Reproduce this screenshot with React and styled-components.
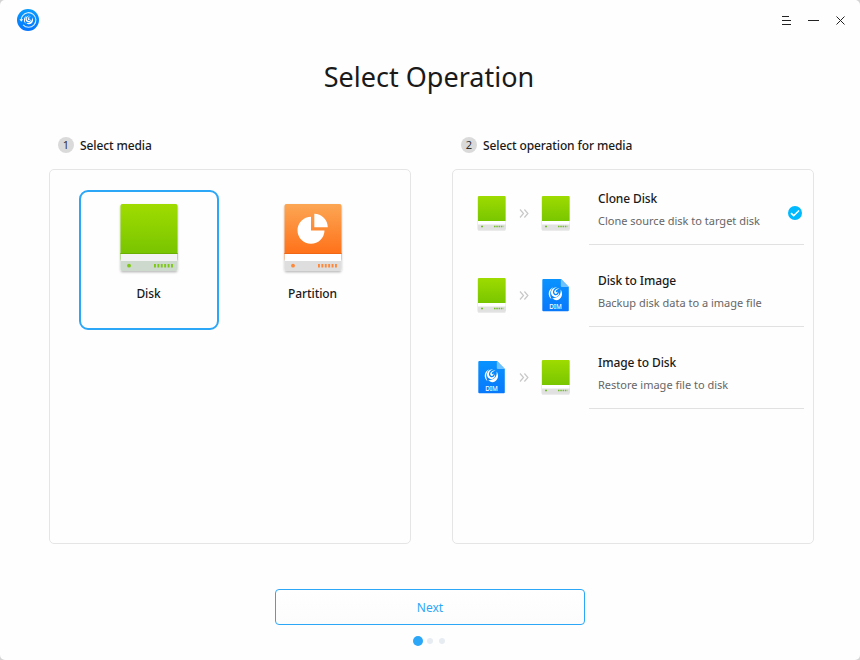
import React from 'react';
import styled, { createGlobalStyle } from 'styled-components';

const GlobalStyle = createGlobalStyle`
  *, *::before, *::after { box-sizing: border-box; }
  html, body { margin: 0; padding: 0; background: #d4d4d4; }
  body { font-family: "Noto Sans", sans-serif; }
`;

const Window = styled.div`
  width: 860px;
  height: 660px;
  display: flex;
  flex-direction: column;
  background: #fefefe;
  border-radius: 5px;
  overflow: hidden;
  color: #1a1a1a;
`;

const TitleBar = styled.header`
  height: 40px;
  display: flex;
  align-items: center;
  justify-content: space-between;
  padding: 0 13px 0 16px;
  svg { display: block; }
`;

const WindowControls = styled.div`
  display: flex;
  gap: 13px;
`;

const ControlButton = styled.button`
  width: 14px;
  height: 14px;
  padding: 0;
  border: 0;
  background: none;
`;

const Title = styled.h1`
  margin: 18px 2px 0 0;
  height: 38px;
  line-height: 38px;
  font-size: 27px;
  font-weight: 400;
  text-align: center;
`;

const Columns = styled.main`
  display: flex;
  gap: 41px;
  margin: 39px 46px 0 49px;
`;

const Column = styled.section`
  width: 362px;
`;

const StepHeading = styled.h2`
  display: flex;
  align-items: center;
  gap: 6px;
  height: 20px;
  margin: 0 0 14px;
  padding-left: 9px;
  font-size: 12px;
  font-weight: 500;
  line-height: 20px;
`;

const StepTitle = styled.span`
  padding-top: 2px;
  letter-spacing: -0.11px;
`;

const StepNumber = styled.span`
  width: 16px;
  height: 16px;
  border-radius: 50%;
  background: #dadada;
  color: #303030;
  font-size: 11px;
  font-weight: 400;
  line-height: 16px;
  text-align: center;
`;

const Panel = styled.div`
  height: 375px;
  border: 1px solid #e5e5e5;
  border-radius: 5px;
`;

const MediaGrid = styled.div`
  display: flex;
  gap: 24px;
  padding: 20px 0 0 29px;
`;

const MediaCard = styled.div`
  width: 140px;
  height: 140px;
  display: flex;
  flex-direction: column;
  align-items: center;
  padding-top: 10px;
  border: 2px solid ${(p) => (p.$selected ? '#2ca7f8' : 'transparent')};
  border-radius: 9px;
  svg { display: block; }
`;

const MediaLabel = styled.span`
  margin: 7px 1px 0 0;
  font-size: 12px;
  font-weight: 500;
  line-height: 18px;
  letter-spacing: -0.11px;
`;

const OperationRow = styled.div`
  display: flex;
  height: 75px;
  margin-bottom: 7px;
  padding-left: 20px;
`;

const Flow = styled.div`
  width: 116px;
  display: flex;
  padding-top: 24px;
  svg { display: block; }
`;

const OperationBody = styled.div`
  width: 215px;
  display: flex;
  align-items: center;
  justify-content: space-between;
  padding: 12px 2px 0 9px;
  border-bottom: 1px solid #e1e1e1;
`;

const OperationText = styled.div`
  height: 60px;
`;

const OperationName = styled.div`
  margin-top: 7px;
  font-size: 12px;
  font-weight: 500;
  line-height: 18px;
  letter-spacing: -0.11px;
`;

const OperationNote = styled.div`
  margin-top: 4px;
  font-size: 11px;
  line-height: 17px;
  color: #666;
`;

const NextButton = styled.button`
  width: 310px;
  height: 36px;
  margin: 45px auto 0;
  padding: 0;
  border: 1px solid #2ca7f8;
  border-radius: 4px;
  background: linear-gradient(#fff, #fcfcfc);
  color: #2ca7f8;
  font-family: inherit;
  font-size: 12px;
`;

const Dots = styled.div`
  display: flex;
  align-items: center;
  height: 10px;
  margin: 11px 0 0 413px;
`;

const Dot = styled.i`
  width: ${(p) => (p.$active ? 10 : 6)}px;
  height: ${(p) => (p.$active ? 10 : 6)}px;
  margin-right: ${(p) => (p.$active ? 4 : 6)}px;
  border-radius: 50%;
  background: ${(p) => (p.$active ? '#2ca7f8' : '#e7ecf2')};
`;

const Swirl = () => (
  <g fill="#fff">
    <path d="M-2-6.5C-7.4-4.6-8.2 2.4-3.9 5.4-5.9 1.3-5.8-3.4-2-6.5Z" />
    <path d="M1.8-6.7C-4.6-6.4-6.3.5-2.1 2.8 1 4.4 4.4 2 3.6-1.5 3 1.2.5 2.2-1.2.9-3.8-.9-2.3-5.3 1.8-6.7Z" />
    <path d="M4.4-5.2C.7-5.8-2-2.9-.9-.7.2 1.2 2.6-.5 2.2-2.5 1.4-1.2.5-1.1.4-2.1.3-3.5 2.1-4.8 4.4-5.2Z" />
    <path d="M5.2-4.2C6 .4 2.8 4.7-3.1 4.3-1.6 6.4 1.6 7.3 4.2 5.2 7.1 2.9 7.4-1.2 5.2-4.2Z" />
  </g>
);

const AppLogo = () => (
  <svg width="24" height="24" viewBox="0 0 24 24">
    <defs>
      <linearGradient id="logoFill" x2="0" y2="1">
        <stop stopColor="#079cff" /><stop offset="1" stopColor="#0575ff" />
      </linearGradient>
    </defs>
    <circle cx="12" cy="12" r="11" fill="url(#logoFill)" />
    <path d="M6.6 7.8A7.3 7.3 0 1 1 7.1 16.8M5.3 11.3A7.3 7.3 0 0 1 6.6 7.8" fill="none" stroke="#d8edff" strokeWidth="1.1" />
    <path d="M3.5 11.2h3.6l-1.8 2.6z" fill="#fff" />
    <g transform="translate(12.5 12) scale(.68)"><Swirl /></g>
  </svg>
);

const BigDrive = ({ kind }) => {
  const orange = kind === 'partition';
  const accent = orange ? '#ff8838' : '#7dc715';
  const fill = `big-${kind}`;
  return (
    <svg width="64" height="76" viewBox="0 0 64 76">
      <defs>
        <linearGradient id={fill} x2="0" y2="1">
          <stop stopColor={orange ? '#fca654' : '#a0dc00'} />
          <stop offset="1" stopColor={orange ? '#ff7119' : '#78c400'} />
        </linearGradient>
        <filter id={`${fill}-shadow`} x="-10%" y="-10%" width="120%" height="120%">
          <feDropShadow dx="0" dy="1.3" stdDeviation="1.1" floodOpacity=".28" />
        </filter>
      </defs>
      <rect x="3.5" y="2" width="57" height="67" rx="2" fill={orange ? '#dedede' : '#ced9ce'} filter={`url(#${fill}-shadow)`} />
      <path d="M3.5 51h57v6l-.5 1.5H4L3.5 57z" fill={accent} opacity=".65" />
      <path d="M4 52h56v7H4z" fill={orange ? '#fff' : '#f3f3f3'} />
      <path d="M3.5 52V4a2 2 0 0 1 2-2h53a2 2 0 0 1 2 2v48z" fill={`url(#${fill})`} />
      <path d="M3.5 51.5h57" stroke={orange ? '#f06716' : '#6bb000'} strokeWidth="1" />
      <circle cx="12" cy="63.7" r="1.9" fill={accent} />
      <path d="M37 63.7h19" stroke={accent} strokeWidth="3.6" strokeDasharray="1.9 1.5" />
      {orange && (
        <g fill="#fff">
          <path d="M30 14.8v13.8h13.5A13.5 13.5 0 1 1 30 14.8Z" />
          <path d="M33.3 11.8A13.8 13.8 0 0 1 46.8 25.2H33.3Z" />
        </g>
      )}
    </svg>
  );
};

const SmallDrive = () => (
  <svg width="34" height="38" viewBox="0 0 34 38">
    <defs>
      <linearGradient id="smallDrive" x2="0" y2="1">
        <stop stopColor="#9edb00" /><stop offset="1" stopColor="#79c600" />
      </linearGradient>
      <filter id="smallShadow" x="-10%" y="-10%" width="120%" height="120%">
        <feDropShadow dx="0" dy=".6" stdDeviation=".7" floodOpacity=".25" />
      </filter>
    </defs>
    <rect x="4.7" y="2" width="28" height="33.5" rx="1" fill="#e0e1e0" filter="url(#smallShadow)" />
    <path d="M5 26.5h27.5v4H5z" fill="#fff" />
    <path d="M5 27V3a1 1 0 0 1 1-1h25.5a1 1 0 0 1 1 1v24z" fill="url(#smallDrive)" />
    <path d="M8 32.5h2" stroke="#72bd2a" strokeWidth="1.4" />
    <path d="M21 32.5h9.5" stroke="#72bd2a" strokeWidth="1.5" strokeDasharray="1.5 .8" />
  </svg>
);

const ImageFile = () => (
  <svg width="34" height="38" viewBox="0 0 34 38">
    <defs>
      <linearGradient id="imageFile" x2="0" y2="1">
        <stop stopColor="#0993ff" /><stop offset="1" stopColor="#0878fb" />
      </linearGradient>
    </defs>
    <path d="M5.3 4a1 1 0 0 1 1-1H24l7.8 8v23.2a1 1 0 0 1-1 1H6.3a1 1 0 0 1-1-1z" fill="url(#imageFile)" />
    <path d="M23.8 3v7a1 1 0 0 0 1 1h7z" fill="#6cc3ff" />
    <g transform="translate(18.4 17.8)"><Swirl /></g>
    <text x="18.5" y="33" fill="#fff" fontFamily="Noto Sans, sans-serif" fontSize="6.3" fontWeight="500" textAnchor="middle">DIM</text>
  </svg>
);

const FlowArrow = () => (
  <svg width="30" height="38" viewBox="0 0 30 38">
    <path d="m13 15.5 3.5 4-3.5 4m4.4-8 3.5 4-3.5 4" fill="none" stroke="#c8c8c8" strokeWidth="1.2" />
  </svg>
);

const CheckMark = () => (
  <svg width="14" height="14" viewBox="0 0 14 14">
    <circle cx="7" cy="7" r="7" fill="#00b9ff" />
    <path d="m3 7.1 2.7 2.6L11 4.5" fill="none" stroke="#fff" strokeWidth="1.6" />
  </svg>
);

const operations = [
  { name: 'Clone Disk', note: 'Clone source disk to target disk', from: SmallDrive, to: SmallDrive, selected: true },
  { name: 'Disk to Image', note: 'Backup disk data to a image file', from: SmallDrive, to: ImageFile },
  { name: 'Image to Disk', note: 'Restore image file to disk', from: ImageFile, to: SmallDrive },
];

const controls = [
  ['Menu', 'M3 3.5h7M3 7.5h9M3 11.5h9'],
  ['Minimize', 'M2 7.5h11'],
  ['Close', 'm3.5 3.5 8 8m0-8-8 8'],
];

export default function App() {
  return (
    <>
      <GlobalStyle />
      <Window>
        <TitleBar>
          <AppLogo />
          <WindowControls>
            {controls.map(([label, d]) => (
              <ControlButton key={label} aria-label={label}>
                <svg width="14" height="14" viewBox="0 0 14 14"><path d={d} fill="none" stroke="#222" /></svg>
              </ControlButton>
            ))}
          </WindowControls>
        </TitleBar>
        <Title>Select Operation</Title>
        <Columns>
          <Column>
            <StepHeading><StepNumber>1</StepNumber><StepTitle>Select media</StepTitle></StepHeading>
            <Panel>
              <MediaGrid>
                <MediaCard $selected><BigDrive kind="disk" /><MediaLabel>Disk</MediaLabel></MediaCard>
                <MediaCard><BigDrive kind="partition" /><MediaLabel>Partition</MediaLabel></MediaCard>
              </MediaGrid>
            </Panel>
          </Column>
          <Column>
            <StepHeading><StepNumber>2</StepNumber><StepTitle>Select operation for media</StepTitle></StepHeading>
            <Panel>
              {operations.map(({ name, note, from: From, to: To, selected }) => (
                <OperationRow key={name}>
                  <Flow><From /><FlowArrow /><To /></Flow>
                  <OperationBody>
                    <OperationText>
                      <OperationName>{name}</OperationName>
                      <OperationNote>{note}</OperationNote>
                    </OperationText>
                    {selected && <CheckMark />}
                  </OperationBody>
                </OperationRow>
              ))}
            </Panel>
          </Column>
        </Columns>
        <NextButton>Next</NextButton>
        <Dots><Dot $active /><Dot /><Dot /></Dots>
      </Window>
    </>
  );
}
